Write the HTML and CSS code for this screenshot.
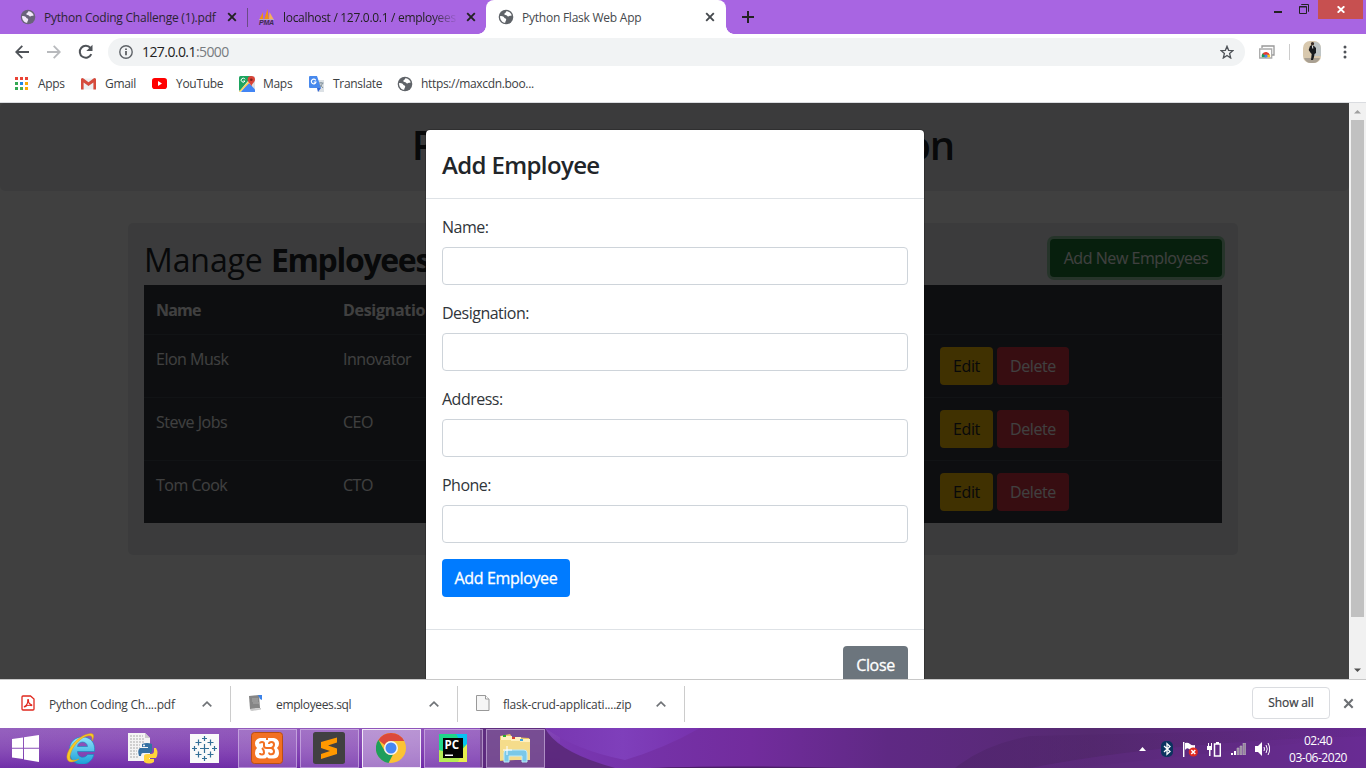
FILE: index.html
```html
<!DOCTYPE html>
<html lang="en">
<head>
<meta charset="utf-8">
<title>Python Flask Web App</title>
<link rel="stylesheet" href="styles.css">
</head>
<body>
<svg class="defs" width="0" height="0">
  <symbol id="globe" viewBox="0 0 16 16">
    <circle cx="8" cy="8" r="7.3" fill="#5f6368"/>
    <path d="M2 7.2c2.2-.4 3.700.4 4.300 1.600.5.800 1.900.5 1.900 1.600 0 1.200-1 1.400-1 3.400C4.300 13.500 2 11 2 7.200zM8.300 2.200c2.500 0 4.700 1.800 5.400 4.100-.9 1-1.500.3-2.400.8-.9.600-1.900.4-2.400-.5-.5-.8-2.200-.3-2.600-1.300-.4-1.200 1.800-1.400 2-3.100z" fill="#fff" class="land"/>
  </symbol>
  <symbol id="x" viewBox="0 0 10 10"><path d="M1.200 1.200 8.800 8.800M8.800 1.200 1.200 8.800" fill="none" stroke="currentColor" stroke-width="1.900"/></symbol>
  <symbol id="chev" viewBox="0 0 10 6"><path d="M.7 5.300 5 1.200l4.300 4.100" fill="none" stroke="#707377" stroke-width="1.700"/></symbol>
</svg>

<header class="tabstrip">
  <div class="tab tab-one">
    <svg class="fav dim" width="16" height="16"><use href="#globe"/></svg>
    <span class="tab-title t1">Python Coding Challenge (1).pdf</span>
    <svg class="tab-x" width="10" height="10"><use href="#x"/></svg>
  </div>
  <div class="tab tab-two">
    <svg class="fav" width="18" height="17" viewBox="0 0 18 17">
      <path d="M1 11 5 3v8zM6 11 9.500 0 11 11z" fill="#f29111"/><path d="m11 11 .5-8L16 11z" fill="#f6b05c"/><path d="M1 10.500h15" stroke="#b9a9ba"/>
      <text x="1" y="16" class="pma">PMA</text>
    </svg>
    <span class="tab-title t2">localhost / 127.0.0.1 / employees</span>
    <svg class="tab-x" width="10" height="10"><use href="#x"/></svg>
  </div>
  <div class="tab tab-active">
    <svg class="fav" width="16" height="16"><use href="#globe"/></svg>
    <span class="tab-title t3">Python Flask Web App</span>
    <svg class="tab-x" width="10" height="10"><use href="#x"/></svg>
  </div>
  <svg class="plus" width="12" height="12" viewBox="0 0 12 12"><path d="M6 0v12M0 6h12" stroke="#222" stroke-width="2"/></svg>
  <div class="window-controls">
    <svg class="w-min" width="8" height="2"><path d="M0 0h8v2H0z" fill="#222"/></svg>
    <svg class="w-restore" width="10" height="10" viewBox="0 0 10 10" fill="none" stroke="#222"><path d="M.5 3v6.500h7V2.500h-7zM.5 3h7M2.500 1V.5h7v7H9"/></svg>
    <span class="w-close"><svg width="8" height="7" viewBox="0 0 8 7"><path d="M.7.3 7.300 6.700M7.300.3.7 6.700" stroke="#fff" stroke-width="1.900"/></svg></span>
  </div>
</header>

<nav class="toolbar">
  <svg class="nav-ico back" width="14" height="14" viewBox="0 0 14 14" fill="none" stroke="#4f5358" stroke-width="1.800"><path d="M14 7H1.500M7.300.8 1.200 7l6.100 6.200"/></svg>
  <svg class="nav-ico fwd" width="14" height="14" viewBox="0 0 14 14" fill="none" stroke="#b8babd" stroke-width="1.800"><path d="M0 7h12.500M6.700.8 12.800 7l-6.100 6.200"/></svg>
  <svg class="nav-ico reload" width="16" height="16" viewBox="0 0 16 16"><path d="M13.300 10.200A6 6 0 1 1 12.500 4" fill="none" stroke="#4f5358" stroke-width="2"/><path d="M14.500.8v6.200H8.300z" fill="#4f5358"/></svg>
  <div class="omnibox">
    <svg width="14" height="14" viewBox="0 0 14 14"><circle cx="7" cy="7" r="6.200" fill="none" stroke="#5f6368" stroke-width="1.400"/><path d="M6.200 6h1.600v4.300H6.200zM6.200 3.500h1.600v1.500H6.200z" fill="#4a4d51"/></svg>
    <span class="url">127.0.0.1<span class="port">:5000</span></span>
    <svg class="star" width="14" height="14" viewBox="0 0 14 14"><path d="m7 1.300 1.600 4 4.400.3-3.400 2.800L10.700 13 7 10.500 3.300 13l1.100-4.600L1 5.600l4.400-.3z" fill="none" stroke="#4f5358" stroke-width="1.300"/></svg>
  </div>
  <svg class="ext" width="16" height="14" viewBox="0 0 16 14"><path d="M3 3V1h12v9h-2" fill="none" stroke="#999" stroke-width="1.300"/><path d="M.7 4h12v9H.7z" fill="#fff" stroke="#aaa" stroke-width="1.300"/><path d="M2.800 12.300a4 4 0 0 1 2-4.500L7 12.300z" fill="#1d9a54"/><path d="M3.500 9a4 4 0 0 1 7.300 1H6z" fill="#e53c30"/><path d="M7 9.800h4a4 4 0 0 1 0 2.500H7z" fill="#fbc31d"/><circle cx="7" cy="11" r="1.600" fill="#4285f4"/></svg>
  <i class="tool-sep"></i>
  <svg class="avatar" width="18" height="22" viewBox="0 0 18 22"><rect width="18" height="22" rx="7" fill="#d8c8ad"/><path d="M11 1h2q5 1 5 7v7h-7z" fill="#bec4c5"/><path d="M1 17h16q-2 5-7 5H8q-5 0-7-5" fill="#a9a092"/><path d="m7 5 2-1 2 1 2 2v5l-1.500 1-.5 3-1 3H8l.7-6-1-1-2-3z" fill="#171a1e"/><circle cx="9.500" cy="2.700" r="1.600" fill="#382c27"/><path d="m9.500 4.500.3 3" stroke="#eee"/></svg>
  <svg class="dots" width="4" height="14" viewBox="0 0 4 14" fill="#4f5358"><circle cx="2" cy="2" r="1.500"/><circle cx="2" cy="7" r="1.500"/><circle cx="2" cy="12" r="1.500"/></svg>
</nav>

<nav class="bookmarks">
  <a class="bm b1"><svg width="14" height="14" viewBox="0 0 14 14"><path d="M0 0h3v3H0zM5 0h3v3H5zM10 0h3v3h-3z" fill="#ea4335"/><path d="M0 5h3v3H0zM0 10h3v3H0z" fill="#34a853"/><path d="M5 5h3v3H5z" fill="#1e88e5"/><path d="M10 5h3v3h-3zM10 10h3v3h-3z" fill="#fbaa05"/><path d="M5 10h3v3H5z" fill="#4caf50"/></svg><span>Apps</span></a>
  <a class="bm b2"><svg width="15" height="12" viewBox="0 0 15 12"><path d="M1 .5h13v11H1z" fill="#eceff1"/><path d="M0 1v10.500h2.600V4.500L7.500 8l4.900-3.500v7H15V1q-1-1.500-2.500-.5l-5 3.700-5-3.700Q1-.5 0 1z" fill="#d54b3d"/></svg><span>Gmail</span></a>
  <a class="bm b3"><svg width="15" height="11" viewBox="0 0 15 11"><rect width="15" height="11" rx="2.800" fill="#f00"/><path d="m6 3 4 2.500L6 8z" fill="#fff"/></svg><span>YouTube</span></a>
  <a class="bm b4"><svg width="16" height="16" viewBox="0 0 16 16"><rect width="16" height="16" rx="1.500" fill="#dde1e3"/><path d="M0 1.500Q0 0 1.500 0H13L1 14.500H0z" fill="#1da45f"/><path d="m9.500 6.500 6.500 7V16H2z" fill="#4285f4"/><path d="M11 4 0 15.500 1 16 12 5.500z" fill="#ffd34d"/><path d="M12.300 0a3.700 3.700 0 0 1 3.700 3.700C16 6 13.300 7 12.300 10.500 11.300 7 8.600 6 8.600 3.700A3.700 3.700 0 0 1 12.300 0z" fill="#db4437"/><circle cx="12.300" cy="3.700" r="1.300" fill="#7b231e"/><path d="M6 3.300A2 2 0 1 0 6 5H4.300" stroke="#fff" fill="none"/></svg><span>Maps</span></a>
  <a class="bm b5"><svg width="16" height="16" viewBox="0 0 16 16"><path d="M6 4h9v12H9z" fill="#dce1e5"/><path d="M0 1q0-1 1-1h7l4 12H1q-1 0-1-1z" fill="#4889ed"/><path d="m8 12 4 0-3 4z" fill="#3367d6"/><path d="M6.700 4.400A2.300 2.300 0 1 0 6.900 6H4.700" stroke="#fff" stroke-width="1.200" fill="none"/><path d="M10 7h4.500M12 6v1M13.500 7q-.5 3-3 4M11 8.500l3 3.500" stroke="#80909a" fill="none"/></svg><span>Translate</span></a>
  <a class="bm b6"><svg width="16" height="16"><use href="#globe"/></svg><span>https://maxcdn.boo...</span></a>
</nav>

<main class="viewport">
  <div class="page">
    <section class="jumbotron"><h1>Python Flask Web Application</h1></section>
    <section class="panel">
      <div class="panel-head">
        <h2>Manage <b>Employees</b></h2>
        <button class="btn btn-success">Add New Employees</button>
      </div>
      <table class="grid">
        <thead><tr><th class="c1">Name</th><th class="c2">Designation</th><th class="c3">Address</th><th class="c4">Phone</th><th></th></tr></thead>
        <tbody>
          <tr><td>Elon Musk</td><td>Innovator</td><td></td><td></td><td><div class="actions"><button class="btn btn-warning">Edit</button><button class="btn btn-danger">Delete</button></div></td></tr>
          <tr><td>Steve Jobs</td><td>CEO</td><td></td><td></td><td><div class="actions"><button class="btn btn-warning">Edit</button><button class="btn btn-danger">Delete</button></div></td></tr>
          <tr><td>Tom Cook</td><td>CTO</td><td></td><td></td><td><div class="actions"><button class="btn btn-warning">Edit</button><button class="btn btn-danger">Delete</button></div></td></tr>
        </tbody>
      </table>
    </section>
    <div class="backdrop"></div>
    <form class="modal">
      <div class="modal-head"><h4>Add Employee</h4></div>
      <div class="modal-body">
        <label>Name:</label><input type="text">
        <label>Designation:</label><input type="text">
        <label>Address:</label><input type="text">
        <label>Phone:</label><input type="text">
        <button type="button" class="btn btn-primary">Add Employee</button>
      </div>
      <div class="modal-foot"><button type="button" class="btn btn-secondary">Close</button></div>
    </form>
  </div>
  <div class="scrollbar">
    <svg width="17" height="17"><path d="M5 10.500h7L8.500 7z" fill="#a0a0a0"/></svg>
    <div class="thumb"></div>
    <svg width="17" height="17"><path d="M5 6.500h7L8.500 10z" fill="#505050"/></svg>
  </div>
</main>

<section class="downloads">
  <div class="dl">
    <svg width="14" height="16" viewBox="0 0 14 16"><path d="M1 2q0-1 1-1h7.500L13 4v10q0 1-1 1H2q-1 0-1-1z" fill="#fff" stroke="#e0281e" stroke-width="1.300"/><path d="M3.500 11.500C6 10 7 7.500 6.700 5.200c-.1-1 .9-1 .8 0-.2 2 1 3.800 3 4.600.8.500.2 1-.8.700-2-.5-4 .1-5.500 1.200-.6.500-1.200.2-.7-.2z" fill="none" stroke="#e0281e" stroke-width="1.100"/></svg>
    <span class="d1">Python Coding Ch....pdf</span>
    <svg class="chev" width="10" height="6"><use href="#chev"/></svg>
  </div>
  <div class="dl">
    <svg width="14" height="16" viewBox="0 0 14 16"><path d="M0 1 10 0l1 13-10 1z" fill="#858585"/><path d="m1 14 11-1v1.500L3 16q-2 0-2-2" fill="#c9c9c9"/><path d="M3 4h6M3 6h6M4 8h6" stroke="#aaa"/><path d="M9 0h4v5l-2-1z" fill="#3b82e8"/></svg>
    <span class="d2">employees.sql</span>
    <svg class="chev" width="10" height="6"><use href="#chev"/></svg>
  </div>
  <div class="dl">
    <svg width="14" height="16" viewBox="0 0 14 16"><path d="M.5.500h9l3.500 3.500v11.500H.5z" fill="#f6f6f6" stroke="#999"/><path d="M9.500.5V4H13" fill="#fff" stroke="#999"/></svg>
    <span class="d3">flask-crud-applicati....zip</span>
    <svg class="chev" width="10" height="6"><use href="#chev"/></svg>
  </div>
  <button class="show-all">Show all</button>
  <svg class="dl-x" width="11" height="11"><use href="#x"/></svg>
</section>

<footer class="taskbar">
  <svg class="wall" width="1366" height="40" viewBox="0 0 1366 40" preserveAspectRatio="none">
    <defs>
      <linearGradient id="base" x2="1"><stop offset="0" stop-color="#8d55b9"/><stop offset=".3" stop-color="#8748b5"/><stop offset=".42" stop-color="#7836b0"/><stop offset=".55" stop-color="#722c9d"/><stop offset=".65" stop-color="#5f2984"/><stop offset=".8" stop-color="#552a70"/><stop offset="1" stop-color="#672a91"/></linearGradient>
      <linearGradient id="fade" x2="0" y2="1"><stop offset="0" stop-color="#fff" stop-opacity=".07"/><stop offset=".5" stop-color="#6b20a8" stop-opacity=".1"/><stop offset="1" stop-color="#5c159c" stop-opacity=".6"/></linearGradient>
      <linearGradient id="blob" x2="1"><stop offset="0" stop-color="#7836b0"/><stop offset=".5" stop-color="#8142bf"/><stop offset="1" stop-color="#7832b0"/></linearGradient>
      <linearGradient id="shade" x2="1"><stop offset="0" stop-color="#4d2468"/><stop offset="1" stop-color="#552470" stop-opacity="0"/></linearGradient>
    </defs>
    <path d="M0 0h1366v40H0z" fill="url(#base)"/>
    <path d="M0 0h560v40H0z" fill="url(#fade)"/>
    <path d="M480 0h65q12 24 70 40H480z" fill="#582876" opacity=".85"/>
    <path d="M545 0h155q-35 20-75 32Q575 22 545 0z" fill="url(#blob)" opacity=".8"/>
    <path d="M955 40q30-24 75-32l336-8v8l-290 32z" fill="url(#shade)" opacity=".6"/>
    <path d="M1030 40q130-26 336-32v32z" fill="#6e2f9b" opacity=".25"/>
    <path d="M650 40q70-3 200 0z" fill="#4b1d68"/>
  </svg>
  <div class="launch">
    <span class="slot s-start"><svg width="27" height="27" viewBox="0 0 27 27" fill="#fff"><path d="M0 4l11-1.500v10.300H0zM12 2.300 27 0v12.800H12zM0 13.800h11v10.300L0 22.500zM12 13.800h15V27l-15-2.500z"/></svg></span>
    <span class="slot s-ie"><svg width="30" height="32" viewBox="0 0 30 32"><defs><linearGradient id="ie" x2="0" y2="1"><stop offset="0" stop-color="#8fe4fb"/><stop offset="1" stop-color="#199ed8"/></linearGradient></defs><path d="M3.500 17.500a12 12 0 0 0 24.500 5h-6.500c-2.500 4.500-10 3.500-10-3h17C29.500 11 25 5 16.500 5 9 5 3.500 10 3.500 17.500zm8-3c.5-6 9.500-6 10 0z" fill="url(#ie)" stroke="#1386bd" stroke-width=".6"/><path d="M26 9c3-5 2-9-4-7C12 4 0 18 1 26c.7 5 6 5 12 1-5 2-9 2-9-2C4 18 13 6 21 4c4-1 6 0 5 5z" fill="#f7c927" stroke="#d99a12" stroke-width=".5"/></svg></span>
    <span class="slot s-py"><svg width="30" height="32" viewBox="0 0 30 32"><path d="M0 1h17l5 5v23H0z" fill="#f4f4f4"/><path d="M17 1v5h5" fill="#ccc"/><path d="M2 4h13M2 7h15M2 10h14M2 13h10M2 16h10M2 19h7M2 22h7M2 25h8" stroke="#aaa" stroke-dasharray="2 1"/><path d="M14 12q5-2 10 0v7q0 2-3 2h-6q-2 0-2 3h-2q-2-6 1-8h8v-1h-6z" fill="#3571a3"/><path d="M26 16h2q3 5 0 10h-7v1h5v3q-5 3-10 0v-6q0-2 3-2h4q3 0 3-3z" fill="#ffd43b"/><circle cx="16" cy="13.500" r="1" fill="#fff"/></svg></span>
    <span class="slot s-tab"><svg width="29" height="29" viewBox="0 0 29 29"><path d="M0 0h29v29H0z" fill="#fafafa"/><path d="M14.500 10v9M10 14.500h9M8.500 5.500v6M5.500 8.500h6M20.500 5.500v6M17.500 8.500h6M8.500 17.500v6M5.500 20.500h6M20.500 17.500v6M17.500 20.500h6M14.500 2v5M12 4.500h5M14.500 22v5M12 24.500h5M4.500 12v5M2 14.500h5M24.500 12v5M22 14.500h5" stroke="#326f97" stroke-width="1.200"/></svg></span>
    <span class="app"><svg width="32" height="32" viewBox="0 0 32 32"><rect x=".5" y=".5" width="31" height="31" rx="3" fill="#f27022" stroke="#b94f13"/><path d="M9 6h14q5 1 5 5.500 0 3-2 4.500 2 1.500 2 5 0 5-5 5.500h-4q-2 0-3-1.500-1 1.500-3 1.500H9Q4 26 4 21q0-3.500 2-5-2-1.500-2-4.500Q4 7 9 6z" fill="#fff"/><path d="M9 11.500q0-1.500 2-1.500t2 1.500V14q0 2 2.500 2H20M9 21q0 1.500 2 1.500t2-2q0-2.500-2-4.500M18 12q0-2 2.500-2t2.500 2.500Q23 15 20.500 16q2.500 1 2.500 3.500t-2.500 2.800T18 20.500M16 5v3" fill="none" stroke="#f27022" stroke-width="2"/></svg></span>
    <span class="app"><svg width="32" height="32" viewBox="0 0 32 32"><rect width="32" height="32" rx="2.500" fill="#414042"/><path d="m8 10 16-4.500v5L15 13.500l9 3v5.500L8 27v-5l9-3-9-3z" fill="#ff9800"/></svg></span>
    <span class="app current"><svg width="30" height="30" viewBox="0 0 30 30"><circle cx="15" cy="15" r="15" fill="#fbc334"/><path d="M15 0A15 15 0 0 1 28.200 8H15a7 7 0 0 0-6.300 4L2.400 7A15 15 0 0 1 15 0z" fill="#dc493c"/><path d="M2.400 6.800 9 18.500a7 7 0 0 0 8 3L12.500 30A15 15 0 0 1 2.400 6.800z" fill="#1e9e5b"/><circle cx="15" cy="15" r="7" fill="#f4f4f4"/><circle cx="15" cy="15" r="5.500" fill="#4687f4"/></svg></span>
    <span class="app"><svg width="28" height="28" viewBox="0 0 28 28"><path d="M0 0h28v28H0z" fill="#21d789"/><path d="M17 0h11v15L20 5z" fill="#07c3f2"/><path d="m28 10v18H12z" fill="#e8ee4d"/><path d="M0 16v12h19l3-6z" fill="#b5ed54"/><path d="M4 4h20v20H4z" fill="#050505"/><path d="M6 20.500h8v1.500H6z" fill="#fff"/><text x="5.500" y="15" class="pc">PC</text></svg></span>
    <span class="app"><svg width="32" height="30" viewBox="0 0 32 30"><path d="M1 6V3l10-2 2 3 17 1 1 4v17L1 28z" fill="#e8c765"/><path d="M1 7h30v20H1z" fill="#f5dc8b"/><path d="M2 3h11v4H2zM12 4h10v4H12zM21 6h10v3H21z" fill="#fff0be"/><path d="M4 2h3v2H4z" fill="#2bab2f"/><path d="M13 4h3v2h-3z" fill="#d94432"/><path d="M21 6h3v2h-3z" fill="#3ca4df"/><path d="M5 29v-9q0-3 3-3h17q3 0 3 3v9h-5v-6H10v6z" fill="#7ac8e8" stroke="#bdeaf9"/><path d="M8 13v9M4 17h9" stroke="#fff"/></svg></span>
  </div>
  <div class="tray">
    <svg class="y-up" width="7" height="4"><path d="M0 4h7L3.500 0z" fill="#fff"/></svg>
    <svg class="y-bt" width="12" height="16" viewBox="0 0 12 16"><rect width="12" height="16" rx="5" fill="#0c335f"/><path d="m3 5 6 5.500-3 2.700V2.800l3 2.700L3 11" fill="none" stroke="#fff" stroke-width="1.300"/></svg>
    <svg class="y-flag" width="15" height="15" viewBox="0 0 15 15"><path d="M.7 0v15" stroke="#fff" stroke-width="1.400"/><path d="M2 1q3-1 5 1t5 1v6q-4 0-6-2T2 8z" fill="#fff"/><circle cx="10.300" cy="10" r="4.600" fill="#df2920"/><path d="m8.300 8 4 4M12.300 8l-4 4" stroke="#fff" stroke-width="1.500"/></svg>
    <svg class="y-bat" width="14" height="15" viewBox="0 0 14 15"><path d="M7.500 2h5.800v12H7.500zM9 .8h3" fill="none" stroke="#fff" stroke-width="1.500"/><path d="M0 4h5v4H0zM1 1h1v3H1zM4 1h1v3H4zM2 8h1.500v6H2z" fill="#fff"/></svg>
    <svg class="y-sig" width="15" height="12" viewBox="0 0 15 12"><path d="M0 10h2v2H0zM3 8h2v4H3z" fill="#fff"/><path d="M6 5h2v7H6zM9 3h2v9H9zM12 0h2.500v12H12z" fill="#938599" stroke="#c9bfce" stroke-width=".5"/></svg>
    <svg class="y-vol" width="15" height="14" viewBox="0 0 15 14"><path d="M0 4h3l4-4v14l-4-4H0z" fill="#fff"/><path d="M9 5q1 2 0 4M11 3q2.500 4 0 8M13 1q3.300 6 0 12" fill="none" stroke="#fff"/></svg>
    <div class="clock"><span>02:40</span><span>03-06-2020</span></div>
  </div>
</footer>
</body>
</html>
```
FILE: styles.css
```css
* { box-sizing: border-box; }
body { margin: 0; width: 1366px; height: 768px; overflow: hidden; display: flex; flex-direction: column; font-family: "Open Sans", "Noto Sans", sans-serif; font-size: 12px; letter-spacing: -.025em; color: #3c4043; background: #fff; }
svg { display: block; flex: none; }
span, a { white-space: nowrap; }
h1, h2, h4 { margin: 0; white-space: nowrap; }
button { font: inherit; letter-spacing: inherit; }
.defs { position: absolute; }

.tabstrip { height: 34px; flex: none; display: flex; background: #a865e2; color: #222; }
.tab { display: flex; align-items: center; height: 34px; }
.tab .tab-title { flex: 1; margin-left: 8px; overflow: hidden; }
.t1 { letter-spacing: -.019em; }
.t3 { letter-spacing: -.02em; }
.tab-one { width: 248px; padding: 0 11px 0 20px; position: relative; }
.tab-one::after { content: ""; position: absolute; right: 0; top: 8px; width: 1px; height: 19px; background: #6b4b85; }
.tab-two { width: 238px; padding: 0 11px 0 10px; }
.tab-two .fav { margin-right: -1px; }
.tab-two .tab-title { flex: none; width: 175px; -webkit-mask-image: linear-gradient(90deg, #000 85%, transparent); mask-image: linear-gradient(90deg, #000 85%, transparent); }
.tab-two .tab-x { margin-left: 8px; }
.tab-active { width: 240px; padding: 0 11px 0 12px; background: #fff; border-radius: 8px 8px 0 0; color: #45494d; position: relative; }
.tab-active::before, .tab-active::after { content: ""; position: absolute; bottom: 0; width: 8px; height: 8px; }
.tab-active::before { left: -8px; background: radial-gradient(circle at 0 0, transparent 7.5px, #fff 8px); }
.tab-active::after { right: -8px; background: radial-gradient(circle at 100% 0, transparent 7.5px, #fff 8px); }
.dim { opacity: .85; }
.dim .land { fill: #a865e2; }
.dim + .tab-title { color: #2b2433; }
.pma { font: italic bold 7px "Liberation Sans", sans-serif; fill: #3c2b50; letter-spacing: -.2px; }
.plus { margin: 11px 0 0 16px; }
.window-controls { margin-left: auto; display: flex; align-items: flex-start; padding-right: 3px; }
.w-min { margin: 11px 17px 0 0; }
.w-restore { margin: 4px 9px 0 0; }
.w-close { width: 45px; height: 19px; background: #c75050; display: flex; align-items: center; justify-content: center; }

.toolbar { height: 36px; flex: none; display: flex; align-items: center; padding-left: 15px; }
.fwd { margin-left: 18px; }
.reload { margin-left: 17px; }
.omnibox { margin-left: 14px; width: 1137px; height: 28px; border-radius: 14px; background: #f1f3f4; display: flex; align-items: center; padding: 0 11px; font-size: 14px; color: #222; }
.url { margin: -1px 0 0 9px; letter-spacing: -.041em; }
.port { color: #777b80; }
.star { margin-left: auto; }
.ext { margin-left: 14px; }
.tool-sep { width: 1px; height: 16px; background: #ccc; margin-left: 14px; }
.avatar { margin-left: 13px; }
.dots { margin-left: 22px; }

.bookmarks { height: 33px; flex: none; display: flex; align-items: center; padding: 0 0 5px 15px; border-bottom: 1px solid #dadce0; }
.bm { display: flex; align-items: center; gap: 9px; }
.b1 { width: 66px; }
.b2 { width: 71px; }
.b3 { width: 87px; }
.b4 { width: 70px; gap: 8px; }
.b5 { width: 88px; gap: 8px; }
.b6 { gap: 8px; letter-spacing: -.028em; }

.viewport { height: 576px; flex: none; display: flex; }
.page { position: relative; width: 1349px; height: 576px; overflow: hidden; font-size: 16px; line-height: 24px; color: #212529; }
.jumbotron { height: 88px; background: #e9ecef; border-radius: 5px; padding: 18px 0 0 17px; text-align: center; margin-bottom: 32px; }
h1 { font-size: 40px; line-height: 48px; font-weight: 600; letter-spacing: -.025em; }
.panel { width: 1110px; height: 332px; margin-left: 128px; padding: 16px; border-radius: 5px; background: #e9ecef; }
.panel-head { display: flex; justify-content: space-between; height: 46px; }
h2 { font-size: 32px; line-height: 41px; font-weight: 400; letter-spacing: -.003em; }
h2 b { letter-spacing: -.042em; }
.btn { height: 38px; border: 0; border-radius: 4px; color: #fff; padding: 1px 0 0; text-align: center; font-size: 16px; }
.btn-success { width: 172px; padding: 0 0 1px; box-shadow: 0 0 0 3px rgba(72, 180, 97, .5); background: #1e7e34; letter-spacing: -.028em; }
.grid { width: 1078px; table-layout: fixed; border-collapse: collapse; background: #343a40; color: #fff; }
.grid th { height: 49px; padding: 2px 12px 0; text-align: left; font-weight: 700; }
.grid td { height: 63px; border-top: 1px solid #454d55; padding: 12px 12px 0; vertical-align: top; letter-spacing: -.03em; }
.c1 { width: 187px; letter-spacing: -.05em; }
.c2 { width: 227px; }
.c3 { width: 180px; }
.c4 { width: 190px; }
.actions { display: flex; gap: 4px; letter-spacing: -.025em; }
.btn-warning { width: 53px; background: #ffc107; color: #212529; }
.btn-danger { width: 72px; background: #dc3545; }
.backdrop { position: absolute; inset: 0; background: rgba(0, 0, 0, .75); }
.modal { position: absolute; left: 425px; top: 26px; width: 500px; background: #fff; border: 1px solid rgba(0, 0, 0, .2); background-clip: padding-box; border-radius: 5px; letter-spacing: -.032em; }
.modal-head { height: 69px; border-bottom: 1px solid #dee2e6; padding: 17px 16px; }
h4 { font-size: 24px; line-height: 36px; font-weight: 600; letter-spacing: -.026em; }
.modal-body { display: flex; flex-direction: column; padding: 16px 16px 32px; height: 430px; }
label { height: 24px; margin-bottom: 8px; color: #30353a; }
input { height: 38px; margin: 0 0 16px; border: 1px solid #ced4da; border-radius: 4px; }
.btn-primary, .btn-secondary { padding: 0 0 1px; letter-spacing: -.022em; -webkit-text-stroke: .3px #fff; }
.btn-primary { width: 128px; background: #007bff; }
.modal-foot { border-top: 1px solid #dee2e6; padding: 16px; display: flex; justify-content: flex-end; }
.btn-secondary { width: 65px; background: #6c757d; }
.scrollbar { width: 17px; background: #f1f1f1; display: flex; flex-direction: column; }
.thumb { height: 497px; width: 13px; margin: 0 2px auto; background: #c1c1c1; }

.downloads { height: 49px; flex: none; border-top: 1px solid #c8c8c8; display: flex; }
.dl { width: 227px; height: 36px; margin-top: 6px; border-right: 1px solid #ccc; display: flex; align-items: center; padding: 0 18px 0 18px; }
.dl:first-child { width: 231px; padding-left: 21px; }
.dl > svg:first-child { margin-top: -3px; }
.dl span { margin: 0 auto 0 13px; }
.dl:first-child span { margin-left: 14px; }
.d1, .d3 { letter-spacing: -.019em; }
.d2 { letter-spacing: -.03em; }
.show-all { margin: 7px 0 0 auto; width: 78px; height: 32px; border: 1px solid #dadce0; border-radius: 4px; background: #fff; color: #3c4043; -webkit-text-stroke: .2px #3c4043; padding: 0 0 1px; letter-spacing: -.01em; }
.dl-x { margin: 18px 12px 0 13px; color: #6c6f73; }

.taskbar { position: relative; height: 40px; flex: none; display: flex; justify-content: space-between; color: #fff; }
.wall { position: absolute; inset: 0; }
.launch, .tray { position: relative; display: flex; align-items: center; }
.slot { display: flex; justify-content: center; width: 62px; }
.s-start { width: 50px; }
.s-tab { width: 61px; margin-right: 3px; }
.app { width: 59px; height: 39px; margin-right: 3px; border: 1px solid rgba(230, 210, 245, .5); background: rgba(255, 255, 255, .16); display: flex; align-items: center; justify-content: center; padding-right: 1px; }
.current { background: rgba(255, 255, 255, .38); border-color: #f1e8f7; }
.pc { font: bold 11.5px "Open Sans", sans-serif; fill: #fff; letter-spacing: 0; }
.y-bt { margin-left: 15px; }
.y-flag { margin-left: 10px; }
.y-bat { margin-left: 9px; }
.y-sig { margin-left: 10px; }
.y-vol { margin-left: 9px; }
.tray > svg { margin-top: 2px; }
.clock { width: 96px; display: flex; flex-direction: column; align-items: center; line-height: 17px; padding-top: 2px; letter-spacing: -.04em; }
```
